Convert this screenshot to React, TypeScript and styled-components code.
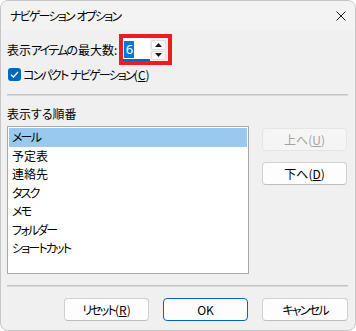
import React from "react";
import styled, { createGlobalStyle } from "styled-components";

const Global = createGlobalStyle`
  html, body { margin: 0; padding: 0; background: #ffffff; }
  * { box-sizing: border-box; }
  body {
    font-family: "Noto Sans CJK JP", "Noto Sans", sans-serif;
    font-feature-settings: "palt";
    color: #000;
  }
`;

const Window = styled.div`
  width: 356px;
  height: 331px;
  border: 1px solid #c6c6c6;
  border-radius: 8px;
  background: #f0f0f0;
  overflow: hidden;
  display: flex;
  flex-direction: column;
`;

const TitleBar = styled.div`
  height: 29px;
  background: #f3f3f3;
  display: flex;
  align-items: center;
  padding-left: 9px;
  padding-right: 9px;
  font-size: 12px;
  line-height: 16px;
`;

const TitleText = styled.span`
  flex: 1;
`;

const CloseIcon = styled.svg`
  width: 10px;
  height: 10px;
  display: block;
`;

const Kana = styled.span`
  letter-spacing: -1.8px;
`;

const Body = styled.div`
  padding: 4px 7px 0 6px;
  display: flex;
  flex-direction: column;
  font-size: 12px;
  line-height: 16px;
`;

const Row = styled.div<{ $h: number; $mt?: number }>`
  display: flex;
  align-items: center;
  height: ${(p) => p.$h}px;
  margin-top: ${(p) => p.$mt ?? 0}px;
`;

const Label = styled.span`
  white-space: nowrap;
`;

const RedFrame = styled.div`
  margin-left: 2px;
  width: 53px;
  height: 31px;
  border: 4px solid #ec1c24;
  display: flex;
  background: #f0f0f0;
`;

const Edit = styled.div`
  width: 27px;
  background: #fff;
  border-bottom: 2px solid #0067c0;
  padding: 3px 0 0 1px;
`;

const Selected = styled.span`
  display: inline-block;
  width: 10px;
  height: 17px;
  background: #0078d7;
  color: #fff;
  font-family: "Noto Sans", sans-serif;
  font-size: 13px;
  line-height: 17px;
  text-align: center;
`;

const SpinCol = styled.div`
  flex: 1;
  display: flex;
  flex-direction: column;
  padding: 2px 2px 1px 1px;
  gap: 1px;
  background: #f0f0f0;
`;

const SpinBtn = styled.div`
  flex: 1;
  background: #fbfbfb;
  border: 1px solid #dcdcdc;
  border-radius: 2px;
  display: flex;
  align-items: center;
  justify-content: center;
`;

const Arrow = styled.svg`
  width: 7px;
  height: 4px;
  display: block;
`;

const Check = styled.div`
  width: 13px;
  height: 13px;
  border-radius: 3px;
  background: #0067c0;
  display: flex;
  align-items: center;
  justify-content: center;
  margin-left: 1px;
  margin-right: 2px;
`;

const Separator = styled.div<{ $mt: number }>`
  margin-top: ${(p) => p.$mt}px;
  height: 2px;
  border-top: 1px solid #c4c4c4;
  border-bottom: 1px solid #dadada;
`;

const GroupLabel = styled.div`
  margin-top: 10px;
  height: 16px;
`;

const ListArea = styled.div`
  display: flex;
  margin-top: 4px;
`;

const ListBox = styled.div`
  width: 242px;
  height: 148px;
  border: 1px solid #a9a9a9;
  background: #fff;
  padding: 1px;
`;

const ListItem = styled.div<{ $sel?: boolean }>`
  height: 18.5px;
  line-height: 18px;
  padding-left: 3px;
  background: ${(p) => (p.$sel ? "#99c9ef" : "transparent")};
`;

const SideCol = styled.div`
  margin-left: 13px;
  padding-top: 2px;
  display: flex;
  flex-direction: column;
  gap: 11px;
`;

const Button = styled.button<{ $primary?: boolean; $w?: number }>`
  width: ${(p) => p.$w ?? 85}px;
  height: 23px;
  padding: 0;
  font-family: "Noto Sans CJK JP", "Noto Sans", sans-serif;
  font-feature-settings: "palt";
  font-size: 12px;
  line-height: 16px;
  color: #000;
  background: #fdfdfd;
  border: 1px solid ${(p) => (p.$primary ? "#0067c0" : "#d0d0d0")};
  border-bottom-color: ${(p) => (p.$primary ? "#0067c0" : "#bdbdbd")};
  border-radius: 4px;
  &:disabled {
    background: #f5f5f5;
    border-color: #e5e5e5;
    color: #a3a3a3;
  }
`;

const ButtonRow = styled.div`
  margin-top: 11px;
  display: flex;
  justify-content: flex-end;
  gap: 14px;
`;

function JP({ text }: { text: string }) {
  const parts = text.split(/([\u30A0-\u30FF]+)/).filter((s) => s.length > 0);
  return (
    <>
      {parts.map((p, i) =>
        /^[\u30A0-\u30FF]+$/.test(p) ? <Kana key={i}>{p}</Kana> : <React.Fragment key={i}>{p}</React.Fragment>
      )}
    </>
  );
}

const items = ["メール", "予定表", "連絡先", "タスク", "メモ", "フォルダー", "ショートカット"];

export default function App() {
  return (
    <>
      <Global />
      <Window>
        <TitleBar>
          <TitleText>
            <JP text="ナビゲーション オプション" />
          </TitleText>
          <CloseIcon viewBox="0 0 10 10">
            <path d="M0.5 0.5 L9.5 9.5 M9.5 0.5 L0.5 9.5" stroke="#1a1a1a" strokeWidth="1" fill="none" />
          </CloseIcon>
        </TitleBar>
        <Body>
          <Row $h={31}>
            <Label>
              <JP text="表示アイテムの最大数:" />
            </Label>
            <RedFrame>
              <Edit>
                <Selected>6</Selected>
              </Edit>
              <SpinCol>
                <SpinBtn>
                  <Arrow viewBox="0 0 7 4">
                    <path d="M3.5 0 L7 4 L0 4 Z" fill="#1a1a1a" />
                  </Arrow>
                </SpinBtn>
                <SpinBtn>
                  <Arrow viewBox="0 0 7 4">
                    <path d="M0 0 L7 0 L3.5 4 Z" fill="#1a1a1a" />
                  </Arrow>
                </SpinBtn>
              </SpinCol>
            </RedFrame>
          </Row>
          <Row $h={13} $mt={3}>
            <Check>
              <svg width="9" height="7" viewBox="0 0 9 7">
                <path d="M1 3.6 L3.4 6 L8 1" stroke="#fff" strokeWidth="1.3" fill="none" />
              </svg>
            </Check>
            <Label>
              <JP text="コンパクト ナビゲーション" />(<u>C</u>)
            </Label>
          </Row>
          <Separator $mt={13} />
          <GroupLabel>表示する順番</GroupLabel>
          <ListArea>
            <ListBox>
              {items.map((t, i) => (
                <ListItem key={t} $sel={i === 0}>
                  <JP text={t} />
                </ListItem>
              ))}
            </ListBox>
            <SideCol>
              <Button disabled>
                上へ(<u>U</u>)
              </Button>
              <Button>
                下へ(<u>D</u>)
              </Button>
            </SideCol>
          </ListArea>
          <Separator $mt={11} />
          <ButtonRow>
            <Button>
              <JP text="リセット" />(<u>R</u>)
            </Button>
            <Button $primary>OK</Button>
            <Button $w={86}>
              <JP text="キャンセル" />
            </Button>
          </ButtonRow>
        </Body>
      </Window>
    </>
  );
}
